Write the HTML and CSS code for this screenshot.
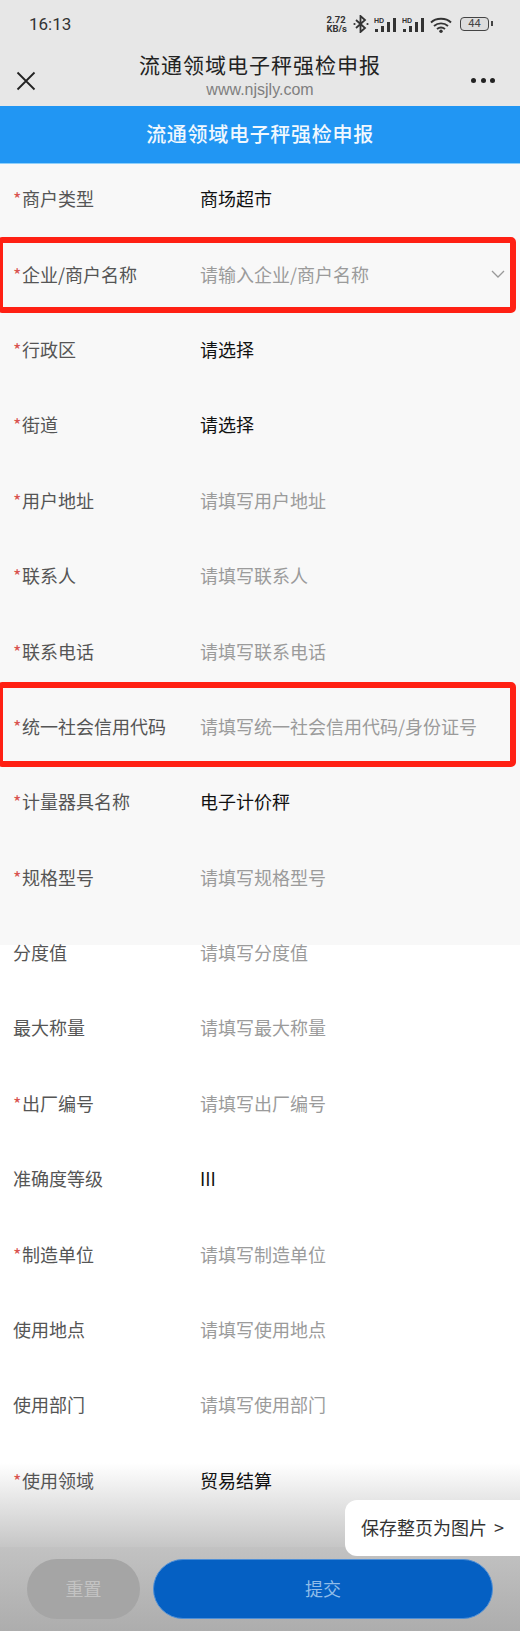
FILE: index.html
```html
<!DOCTYPE html>
<html lang="zh-CN">

<head>
    <meta charset="UTF-8">
    <meta name="viewport" content="width=device-width, initial-scale=1.0">
    <title>流通领域电子秤强检申报</title>
    <link rel="stylesheet" href="styles.css">
</head>

<body>
    <div class="page">
        <header class="topbar">
            <div class="status">
                <span class="clock">16:13</span>
                <div class="status-icons">
                    <span class="speed">2.72<br>KB/s</span>
                    <svg class="ic-bt" width="16" height="18" viewBox="0 0 16 18">
                        <path d="M3 5l9 8-4.500 4V1L12 5l-9 8" fill="none" stroke="#333" stroke-width="1.800"/>
                        <circle cx="1.500" cy="9" r="1.100" fill="#333"/>
                        <circle cx="14.500" cy="9" r="1.100" fill="#333"/>
                    </svg>
                    <svg class="ic-signal" width="23" height="17" viewBox="0 0 23 17">
                        <text x="0" y="6.500" class="hd">HD</text>
                        <rect x="1" y="13" width="3" height="3" fill="#333"/>
                        <rect x="7" y="10" width="3" height="6" fill="#333"/>
                        <rect x="13" y="6" width="3" height="10" fill="#333"/>
                        <rect x="19" y="2" width="3" height="14" fill="#333"/>
                    </svg>
                    <svg class="ic-signal" width="23" height="17" viewBox="0 0 23 17">
                        <text x="0" y="6.500" class="hd">HD</text>
                        <rect x="1" y="13" width="3" height="3" fill="#333"/>
                        <rect x="7" y="10" width="3" height="6" fill="#333"/>
                        <rect x="13" y="6" width="3" height="10" fill="#333"/>
                        <rect x="19" y="2" width="3" height="14" fill="#333"/>
                    </svg>
                    <svg class="ic-wifi" width="22" height="17" viewBox="0 0 22 17">
                        <path d="M1 6.500C6 1.500 16 1.500 21 6.500M4 10c4-3.500 10-3.500 14 0M7 13c2.500-2 5.500-2 8 0" fill="none" stroke="#333" stroke-width="1.900"/>
                        <circle cx="11" cy="15.200" r="1.700" fill="#333"/>
                    </svg>
                    <span class="battery">44</span>
                </div>
            </div>
            <div class="titlebar">
                <svg class="ic-close" width="20" height="20" viewBox="0 0 20 20">
                    <path d="M1.500 1.500l17 17M18.500 1.500l-17 17" fill="none" stroke="#222" stroke-width="1.800"/>
                </svg>
                <div class="titles">
                    <div class="title">流通领域电子秤强检申报</div>
                    <div class="domain">www.njsjly.com</div>
                </div>
                <div class="dots"><i></i><i></i><i></i></div>
            </div>
        </header>

        <h1 class="band">流通领域电子秤强检申报</h1>

        <form class="form">
            <div class="row"><label class="req">商户类型</label><span class="val">商场超市</span></div>
            <div class="row">
                <label class="req">企业/商户名称</label><span class="hint">请输入企业/商户名称</span>
                <svg class="ic-arrow" width="14" height="8" viewBox="0 0 14 8">
                    <path d="M1 1l6 6 6-6" fill="none" stroke="#999" stroke-width="1.300"/>
                </svg>
                <div class="mark mark-a"></div>
            </div>
            <div class="row"><label class="req">行政区</label><span class="val">请选择</span></div>
            <div class="row"><label class="req">街道</label><span class="val">请选择</span></div>
            <div class="row"><label class="req">用户地址</label><span class="hint">请填写用户地址</span></div>
            <div class="row"><label class="req">联系人</label><span class="hint">请填写联系人</span></div>
            <div class="row"><label class="req">联系电话</label><span class="hint">请填写联系电话</span></div>
            <div class="row">
                <label class="req">统一社会信用代码</label><span class="hint">请填写统一社会信用代码/身份证号</span>
                <div class="mark mark-b"></div>
            </div>
            <div class="row"><label class="req">计量器具名称</label><span class="val">电子计价秤</span></div>
            <div class="row"><label class="req">规格型号</label><span class="hint">请填写规格型号</span></div>
            <div class="row"><label>分度值</label><span class="hint">请填写分度值</span></div>
            <div class="row"><label>最大称量</label><span class="hint">请填写最大称量</span></div>
            <div class="row"><label class="req">出厂编号</label><span class="hint">请填写出厂编号</span></div>
            <div class="row"><label>准确度等级</label><span class="val">III</span></div>
            <div class="row"><label class="req">制造单位</label><span class="hint">请填写制造单位</span></div>
            <div class="row"><label>使用地点</label><span class="hint">请填写使用地点</span></div>
            <div class="row"><label>使用部门</label><span class="hint">请填写使用部门</span></div>
            <div class="row"><label class="req">使用领域</label><span class="val">贸易结算</span></div>
        </form>

        <footer class="footer">
            <div class="save-tip">保存整页为图片 &gt;</div>
            <button type="button" class="btn btn-reset">重置</button>
            <button type="button" class="btn btn-submit">提交</button>
        </footer>
    </div>
</body>

</html>
```

FILE: styles.css
```css
* {
    box-sizing: border-box;
}

body {
    margin: 0;
    background-color: #fff;
    font-family: "Liberation Sans", "Noto Sans CJK SC", sans-serif;
}

.page {
    position: relative;
    width: 520px;
    height: 1631px;
    overflow: hidden;
}

/* top of the phone screen */
.topbar {
    height: 106px;
    background-color: #e7e7e7;
}

.status {
    display: flex;
    justify-content: space-between;
    align-items: center;
    height: 48px;
    padding: 0 28px 0 29px;
}

.clock {
    font-family: "Roboto", sans-serif;
    font-size: 17px;
    font-weight: 400;
    color: #333;
}

.status-icons {
    display: flex;
    align-items: center;
    gap: 5px;
}

.speed {
    margin-right: 1px;
    font-family: "Roboto", sans-serif;
    font-size: 9.500px;
    font-weight: 700;
    line-height: 9px;
    color: #333;
}

.hd {
    font-family: "Liberation Sans", sans-serif;
    font-size: 7px;
    font-weight: 700;
    fill: #333;
}

.ic-wifi {
    margin: 0 3px 0 0;
}

.battery {
    position: relative;
    width: 29px;
    height: 14px;
    margin-right: 3px;
    border: 1.500px solid #444;
    border-radius: 4px;
    background-color: #ddd;
    font-family: "Roboto", sans-serif;
    font-size: 11px;
    line-height: 11px;
    text-align: center;
    color: #444;
}

.battery::after {
    content: "";
    position: absolute;
    top: 3px;
    right: -5px;
    width: 2px;
    height: 5px;
    background-color: #444;
}

.titlebar {
    display: flex;
    align-items: center;
    justify-content: space-between;
    height: 58px;
    padding: 0 25px 0 16px;
}

.ic-close {
    margin-top: 7px;
}

.titles {
    position: absolute;
    top: 48px;
    left: 0;
    width: 520px;
    text-align: center;
}

.title {
    font-family: "Noto Sans CJK SC", sans-serif;
    font-size: 21px;
    line-height: 32px;
    letter-spacing: 1px;
    color: #222;
}

.domain {
    font-size: 16px;
    line-height: 20px;
    color: #7f7f7f;
}

.dots {
    display: flex;
    gap: 4.500px;
    margin-top: 7px;
}

.dots i {
    display: block;
    width: 5px;
    height: 5px;
    border-radius: 50%;
    background-color: #222;
}

.band {
    height: 58px;
    margin: 0;
    background-color: #2196f3;
    border-bottom: 1px solid #8fd0fb;
    font-family: "Noto Sans CJK SC", sans-serif;
    font-size: 20px;
    font-weight: 500;
    line-height: 56px;
    letter-spacing: 0.700px;
    text-align: center;
    color: #f1f8fe;
}

/* the grey panel stops at 945, the fade starts near the last row */
.form {
    height: 1383px;
    background: linear-gradient(#f8f8f8 781px, #fff 781px, #fff 1299px, #c6c6c6 1383px);
    font-family: "Noto Sans CJK SC", sans-serif;
    font-size: 18px;
}

.row {
    position: relative;
    display: flex;
    align-items: center;
    height: 75.400px;
    padding: 0 13px 7px;
}

.row label {
    width: 187px;
    flex-shrink: 0;
    color: #555;
}

.row label.req::before {
    content: "*";
    display: inline-block;
    width: 9px;
    color: #d9534f;
}

.val {
    color: #111;
}

.hint {
    color: #9b9b9b;
}

.ic-arrow {
    margin-left: auto;
    margin-right: 2px;
}

/* red boxes run slightly off the left edge of the screen */
.mark {
    position: absolute;
    left: -3px;
    width: 519px;
    border: 6px solid #ff2013;
    border-radius: 5px;
}

.mark-a {
    top: -2.400px;
    height: 76px;
}

.mark-b {
    top: -9.800px;
    height: 85px;
}

.footer {
    position: relative;
    display: flex;
    align-items: flex-start;
    gap: 13px;
    height: 84px;
    padding: 12px 0 0 27px;
    background: linear-gradient(#c2c2c2, #adadad);
}

.save-tip {
    position: absolute;
    right: 0;
    bottom: 75px;
    width: 175px;
    height: 56px;
    padding-left: 16px;
    border-radius: 12px 0 0 12px;
    background-color: #fff;
    font-family: "Noto Sans CJK SC", sans-serif;
    font-size: 18px;
    line-height: 54px;
    word-spacing: 3px;
    color: #333;
}

.btn {
    height: 60px;
    padding: 0 0 2px;
    border: none;
    border-radius: 30px;
    font-family: "Noto Sans CJK SC", sans-serif;
    font-size: 18px;
}

.btn-reset {
    width: 113px;
    background-color: #a5a5a5;
    color: #c3c3c3;
}

.btn-submit {
    width: 340px;
    background-color: #0560c3;
    border: 1px solid #4f8fd6;
    color: #8fbce9;
}
```
